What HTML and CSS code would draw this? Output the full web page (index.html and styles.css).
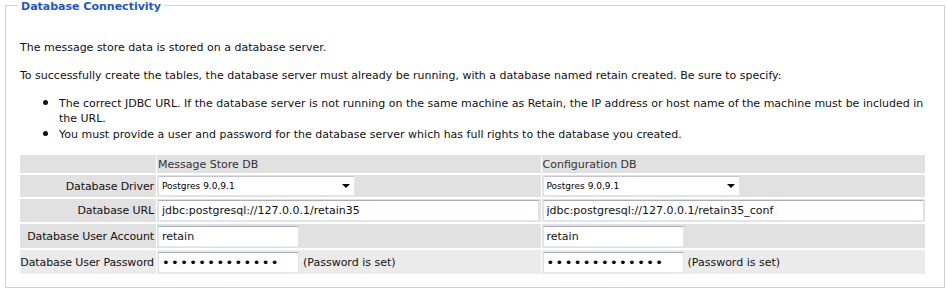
FILE: index.html
```html
<!DOCTYPE html>
<html lang="en">
<head>
    <meta charset="UTF-8">
    <title>Database Connectivity</title>
    <link rel="stylesheet" href="styles.css">
</head>
<body>
    <fieldset class="panel">
        <legend class="panel-title">Database Connectivity</legend>

        <p class="intro first">The message store data is stored on a database server.</p>
        <p class="intro">To successfully create the tables, the database server must already be running, with a database named retain created. Be sure to specify:</p>
        <ul class="notes">
            <li>The correct JDBC URL. If the database server is not running on the same machine as Retain, the IP address or host name of the machine must be included in the URL.</li>
            <li>You must provide a user and password for the database server which has full rights to the database you created.</li>
        </ul>

        <!-- Connection settings -->
        <table class="db-table">
            <colgroup>
                <col class="col-label">
                <col>
                <col>
            </colgroup>
            <tr class="row-head">
                <td></td>
                <td class="col-title">Message Store DB</td>
                <td class="col-title">Configuration DB</td>
            </tr>
            <tr class="row-driver">
                <td class="label">Database Driver</td>
                <td><span class="select-wrap"><select class="driver"><option>Postgres 9.0,9.1</option></select></span></td>
                <td><span class="select-wrap"><select class="driver"><option>Postgres 9.0,9.1</option></select></span></td>
            </tr>
            <tr class="row-url">
                <td class="label">Database URL</td>
                <td><input class="field url" type="text" value="jdbc:postgresql://127.0.0.1/retain35"></td>
                <td><input class="field url" type="text" value="jdbc:postgresql://127.0.0.1/retain35_conf"></td>
            </tr>
            <tr class="row-user">
                <td class="label">Database User Account</td>
                <td><input class="field short" type="text" value="retain"></td>
                <td><input class="field short" type="text" value="retain"></td>
            </tr>
            <tr class="row-pass">
                <td class="label">Database User Password</td>
                <td><input class="field short secret" type="password" value="0123456789abc"><span class="pass-note">(Password is set)</span></td>
                <td><input class="field short secret" type="password" value="0123456789abc"><span class="pass-note">(Password is set)</span></td>
            </tr>
        </table>
    </fieldset>
</body>
</html>
```

FILE: styles.css
```css
body {
    margin: 0;
    font-family: "DejaVu Sans", sans-serif;
    font-size: 11px;
    color: #111;
}
.panel {
    margin: -4px 1px 0 5px;
    padding: 0 19px 11px 14px;
    border: 1px solid #d0d0d0;
    min-width: 0;
}
.panel-title {
    margin-left: -2px;
    padding: 4px 3px 0;
    line-height: 14px;
    font-size: 11px;
    font-weight: bold;
    color: #2157c4;
}
.intro {
    margin: 0 0 12px;
    line-height: 15px;
}
.intro.first {
    margin: 26px 0 13px;
}
.notes {
    margin: 0 0 11px;
    padding-left: 39px;
    line-height: 15px;
}
.notes li::marker {
    font-size: 15px;
}
.db-table {
    width: calc(100% + 2px);
    margin-left: -1px;
    table-layout: fixed;
    border-spacing: 1px 2px;
}
.col-label {
    width: 136px;
}
.db-table td {
    background-color: #e1e1e1;
    padding: 0 0 0 1px;
    vertical-align: middle;
    white-space: nowrap;
}
.db-table td.label {
    text-align: right;
    padding: 0 2px 0 0;
    letter-spacing: -0.1px;
}
.row-head td {
    height: 18px;
    color: #333;
}
.row-driver td {
    height: 22px;
}
.row-url td {
    height: 23px;
}
.row-user td,
.row-pass td {
    height: 24px;
}
.db-table .row-pass td {
    background-color: #ebebeb;
}
.field {
    box-sizing: border-box;
    height: 21px;
    margin: 0;
    padding: 0 3px;
    border: 1px solid #e2e3ea;
    border-top-color: #abadb3;
    border-bottom-color: #e3e9ef;
    background: #fff;
    font-family: inherit;
    font-size: 11px;
    color: #111;
    vertical-align: middle;
}
.field.secret {
    font-size: 13px;
    letter-spacing: 1.4px;
    color: #000;
}
.url {
    width: 381px;
}
.short {
    width: 141px;
}
.pass-note {
    margin-left: 4px;
    vertical-align: middle;
}
.select-wrap {
    position: relative;
    display: inline-block;
    vertical-align: middle;
}
.select-wrap::after {
    content: "";
    position: absolute;
    right: 5px;
    top: 8px;
    border-left: 4px solid transparent;
    border-right: 4px solid transparent;
    border-top: 4px solid #000;
    pointer-events: none;
}
.driver {
    -webkit-appearance: none;
    appearance: none;
    box-sizing: border-box;
    width: 197px;
    height: 20px;
    margin: 0;
    padding: 0 3px;
    border: 1px solid #e2e3ea;
    border-top-color: #c5c7cc;
    border-radius: 2px;
    background: #fff;
    font-family: inherit;
    font-size: 9px;
    color: #000;
    vertical-align: middle;
}
```
